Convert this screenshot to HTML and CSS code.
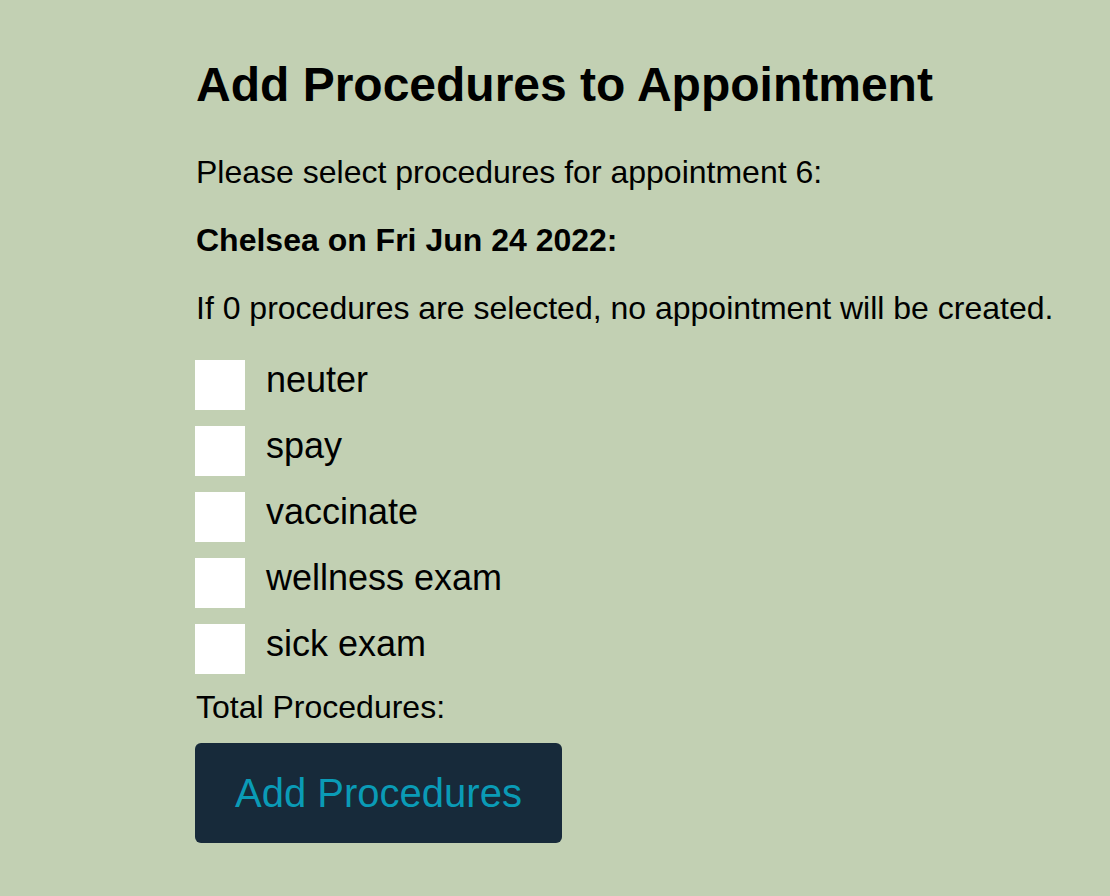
FILE: index.html
```html
<!DOCTYPE html>
<html>
<head>
<meta charset="utf-8">
<link rel="stylesheet" href="styles.css">
</head>
<body>
<main class="page">
  <h1 class="title">Add Procedures to Appointment</h1>
  <p class="text">Please select procedures for appointment 6:</p>
  <p class="text strong">Chelsea on Fri Jun 24 2022:</p>
  <p class="text">If 0 procedures are selected, no appointment will be created.</p>
  <ul class="list">
    <li class="item"><span class="box"></span><span class="label">neuter</span></li>
    <li class="item"><span class="box"></span><span class="label">spay</span></li>
    <li class="item"><span class="box"></span><span class="label">vaccinate</span></li>
    <li class="item"><span class="box"></span><span class="label">wellness exam</span></li>
    <li class="item"><span class="box"></span><span class="label">sick exam</span></li>
  </ul>
  <div class="total">Total Procedures:</div>
  <button class="btn">Add Procedures</button>
</main>
</body>
</html>
```

FILE: styles.css
```css
html, body {
  margin: 0;
  background: #c2d0b3;
  font-family: "Liberation Sans", Arial, sans-serif;
  color: #000;
}
.page {
  padding: 57px 0 40px 196px;
}
.title {
  font-size: 48px;
  font-weight: bold;
  line-height: 56px;
  margin: 0 0 41px 0;
}
.text {
  font-size: 32px;
  line-height: 36px;
  margin: 0 0 32px 0;
}
.strong { font-weight: bold; }
.list {
  list-style: none;
  margin: 34px 0 0 0;
  padding: 0;
  display: flex;
  flex-direction: column;
  gap: 16px;
}
.item {
  display: flex;
  align-items: flex-start;
  gap: 21px;
  height: 50px;
}
.box {
  width: 50px;
  height: 50px;
  background: #fff;
  margin-left: -1px;
  flex: none;
}
.label {
  font-size: 36px;
  line-height: 40px;
}
.total {
  font-size: 32px;
  line-height: 36px;
  margin-top: 15px;
}
.btn {
  margin-top: 18px;
  margin-left: -1px;
  width: 367px;
  height: 100px;
  border: none;
  border-radius: 6px;
  background: #172a3a;
  color: #0a9bb6;
  font-family: "Liberation Sans", Arial, sans-serif;
  font-size: 40px;
  line-height: 46px;
  padding: 0;
  display: block;
}
```
